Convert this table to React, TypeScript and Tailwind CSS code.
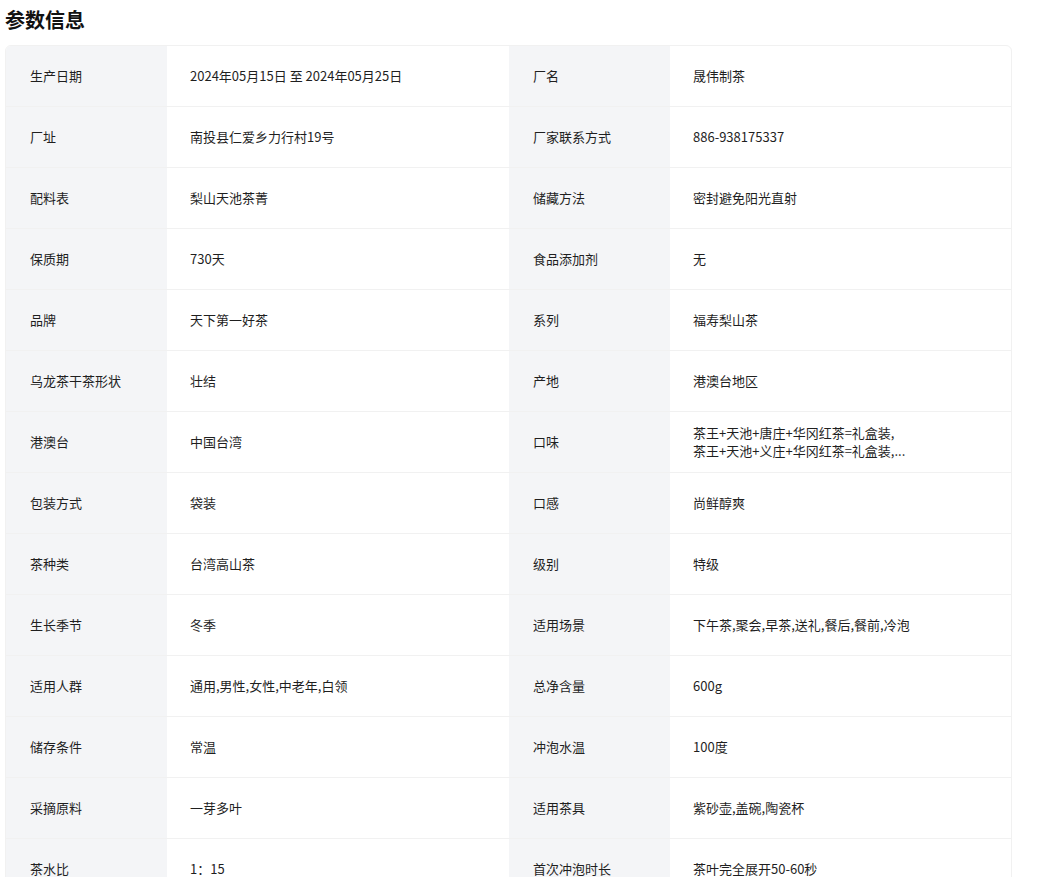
const rows: [string, string, string, string][] = [
  ["生产日期", "2024年05月15日 至 2024年05月25日", "厂名", "晟伟制茶"],
  ["厂址", "南投县仁爱乡力行村19号", "厂家联系方式", "886-938175337"],
  ["配料表", "梨山天池茶菁", "储藏方法", "密封避免阳光直射"],
  ["保质期", "730天", "食品添加剂", "无"],
  ["品牌", "天下第一好茶", "系列", "福寿梨山茶"],
  ["乌龙茶干茶形状", "壮结", "产地", "港澳台地区"],
  ["港澳台", "中国台湾", "口味", "茶王+天池+唐庄+华冈红茶=礼盒装,\n茶王+天池+义庄+华冈红茶=礼盒装,..."],
  ["包装方式", "袋装", "口感", "尚鲜醇爽"],
  ["茶种类", "台湾高山茶", "级别", "特级"],
  ["生长季节", "冬季", "适用场景", "下午茶,聚会,早茶,送礼,餐后,餐前,冷泡"],
  ["适用人群", "通用,男性,女性,中老年,白领", "总净含量", "600g"],
  ["储存条件", "常温", "冲泡水温", "100度"],
  ["采摘原料", "一芽多叶", "适用茶具", "紫砂壶,盖碗,陶瓷杯"],
  ["茶水比", "1：15", "首次冲泡时长", "茶叶完全展开50-60秒"],
];

function Cell({ label, value }: { label: string; value: string }) {
  return (
    <>
      <div className="w-[161px] shrink-0 bg-[#f4f5f7] flex items-center pl-[24px] pr-3">
        {label}
      </div>
      <div className="flex-1 min-w-0 flex items-center pl-[23px] pr-4">
        <span className="whitespace-pre-line leading-[18px]">{value}</span>
      </div>
    </>
  );
}

export default function App() {
  return (
    <div className="bg-white min-h-screen text-[#1f1f1f] font-['Microsoft_YaHei','Noto_Sans_CJK_SC',sans-serif]">
      <h2 className="pl-[5px] pt-[7px] h-[45px] text-[20px] font-bold leading-[26px] text-[#111]">
        参数信息
      </h2>
      <div className="ml-[5px] w-[1007px] rounded-md border border-[#f1f1f1] overflow-hidden text-[13px]">
        {rows.map(([l1, v1, l2, v2]) => (
          <div key={l1} className="flex h-[61px] border-b border-[#f1f1f1]">
            <div className="flex w-[503px]">
              <Cell label={l1} value={v1} />
            </div>
            <div className="flex flex-1">
              <Cell label={l2} value={v2} />
            </div>
          </div>
        ))}
      </div>
    </div>
  );
}
